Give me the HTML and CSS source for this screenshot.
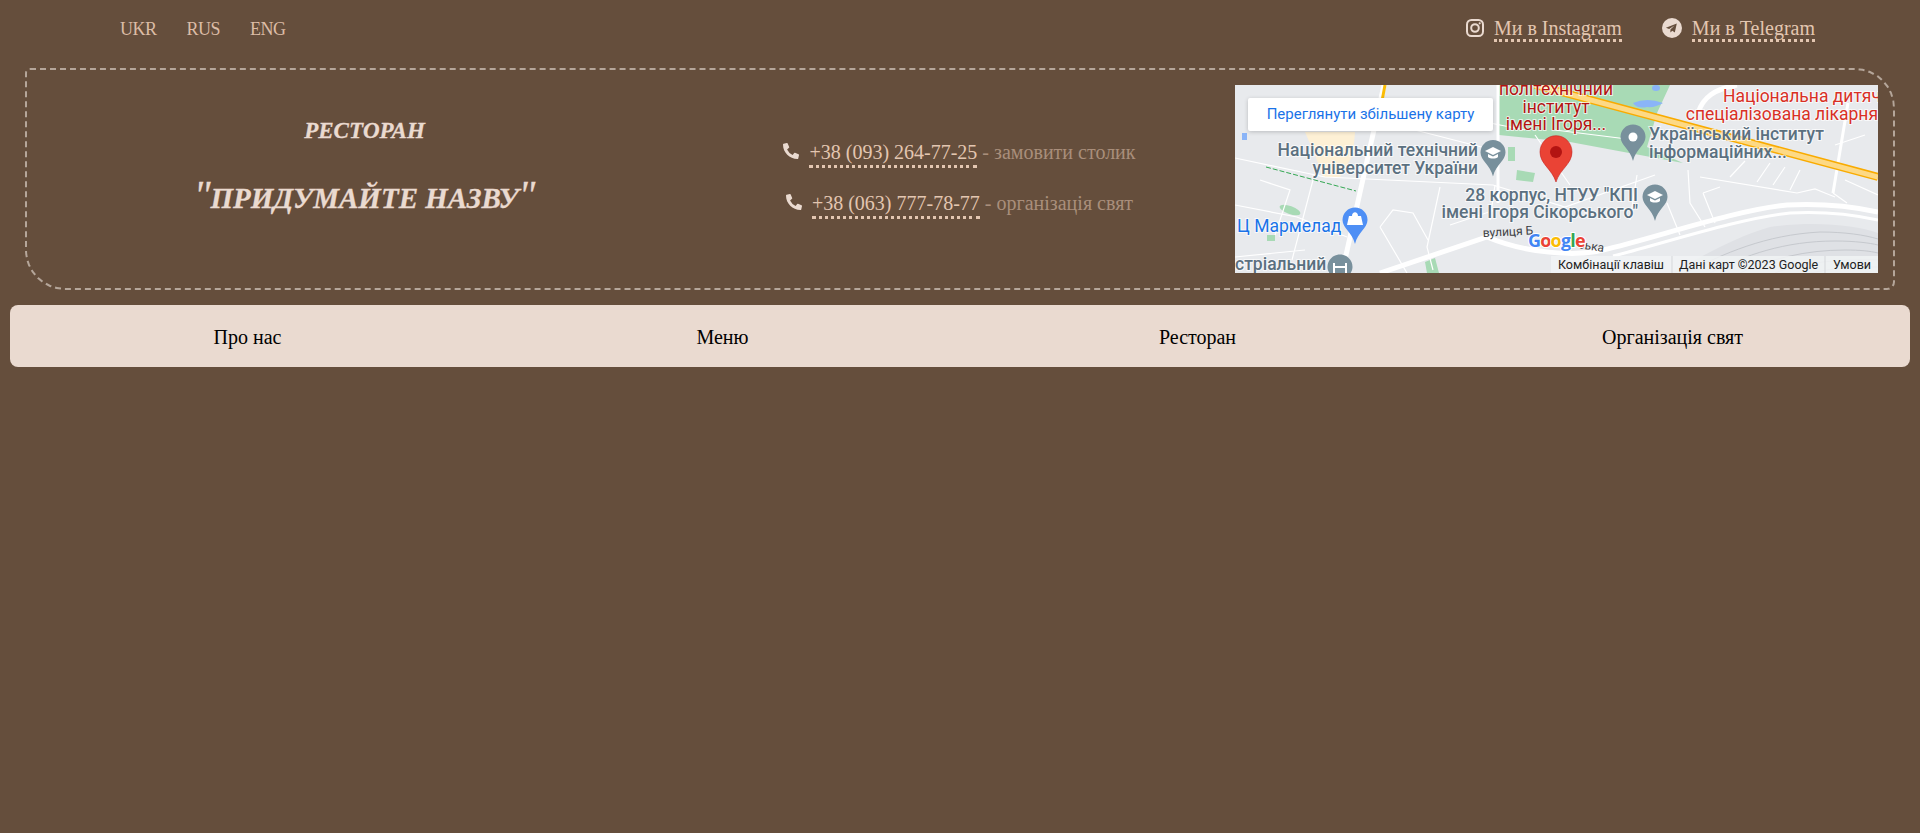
FILE: index.html
```html
<!DOCTYPE html>
<html lang="uk">

<head>
    <meta charset="UTF-8">
    <meta name="viewport" content="width=device-width, initial-scale=1.0">
    <title>Ресторан</title>
    <link rel="stylesheet" href="styles.css">
</head>

<body>
    <div class="top-bar">
        <div class="langs">
            <a href="#">UKR</a>
            <a href="#">RUS</a>
            <a href="#">ENG</a>
        </div>
        <div class="socials">
            <div class="social">
                <svg class="social-icon" viewBox="0 0 18 18">
                    <rect x="1" y="1" width="16" height="16" rx="4.5" class="ig-line" />
                    <circle cx="9" cy="9" r="3.8" class="ig-line" />
                    <circle cx="13.7" cy="4.3" r="1.1" class="icon-fill" />
                </svg>
                <a href="#" class="dotted">Ми в Instagram</a>
            </div>
            <div class="social">
                <svg class="social-icon tg" viewBox="0 0 20 20">
                    <circle cx="10" cy="10" r="10" class="icon-fill" />
                    <path d="M14.8 5.6 3.9 9.8l3.2 1.2 5.4-3.6-4.1 4.2 0 3 1.9-1.9 2.5 1.9z" class="tg-plane" />
                </svg>
                <a href="#" class="dotted">Ми в Telegram</a>
            </div>
        </div>
    </div>

    <div class="hero">
        <div class="brand">
            <h2>РЕСТОРАН</h2>
            <h1><span class="quote">"</span>ПРИДУМАЙТЕ НАЗВУ<span class="quote">"</span></h1>
        </div>

        <div class="phones">
            <p>
                <svg class="phone-icon" viewBox="0 0 512 512"><path d="M497.39 361.8l-112-48a24 24 0 0 0-28 6.9l-49.6 60.6A370.66 370.66 0 0 1 130.6 204.11l60.6-49.6a23.94 23.94 0 0 0 6.9-28l-48-112A24.16 24.16 0 0 0 122.6.61l-104 24A24 24 0 0 0 0 48c0 256.5 207.9 464 464 464a24 24 0 0 0 23.4-18.6l24-104a24.29 24.29 0 0 0-14.01-27.6z" /></svg>
                <a href="#" class="dotted">+38 (093) 264-77-25</a> - замовити столик
            </p>
            <p>
                <svg class="phone-icon" viewBox="0 0 512 512"><path d="M497.39 361.8l-112-48a24 24 0 0 0-28 6.9l-49.6 60.6A370.66 370.66 0 0 1 130.6 204.11l60.6-49.6a23.94 23.94 0 0 0 6.9-28l-48-112A24.16 24.16 0 0 0 122.6.61l-104 24A24 24 0 0 0 0 48c0 256.5 207.9 464 464 464a24 24 0 0 0 23.4-18.6l24-104a24.29 24.29 0 0 0-14.01-27.6z" /></svg>
                <a href="#" class="dotted">+38 (063) 777-78-77</a> - організація свят
            </p>
        </div>

        <div class="map">
            <svg class="map-svg" viewBox="0 0 643 188">
                <defs>
                    <path id="pin" d="M0-12.5C7-12.5 12.5-7 12.5 0 12.5 8 3 12 0 24-3 12-12.5 8-12.5 0-12.5-7-7-12.5 0-12.5Z" />
                    <g id="cap">
                        <path d="M0-6-8-2 0 2 8-2Z" class="cap-white" />
                        <path d="M-5 1V4C-3 6 3 6 5 4V1L0 3.5Z" class="cap-white" />
                    </g>
                </defs>
                <rect width="643" height="188" class="m-bg" />

                <!-- parks and patches -->
                <path d="M264 0H435L422 28 412 62 448 78 335 57 264 50Z" class="m-green" />
                <rect x="273" y="62" width="7" height="14" class="m-green" />
                <path d="M282 85 300 88 298 97 281 95Z" class="m-green" />
                <ellipse cx="55" cy="125" rx="11" ry="4" transform="rotate(20 55 125)" class="m-green" />
                <rect x="32" y="150" width="8" height="6" class="m-green" />
                <path d="M190 177 200 173 204 188H192Z" class="m-green" />
                <rect x="581" y="183" width="30" height="5" class="m-green" />
                <path d="M70 47H120L118 70 105 92H88L80 70Z" class="m-cream" />
                <rect x="7" y="48" width="5" height="7" class="m-water" />
                <path d="M398 18Q412 12 428 18 420 23 412 22 402 24 398 18Z" class="m-water" />
                <ellipse cx="421" cy="3" rx="4" ry="3" class="m-water" />
                <path d="M31 82 121 106" class="m-rail-green" />

                <!-- railway yard -->
                <path d="M435 188C470 170 500 152 535 142 580 136 620 140 643 148V188Z" class="m-yard" />
                <path d="M450 188C490 168 530 150 585 147 610 147 630 150 643 154M475 188C510 170 550 156 600 156 620 156 635 158 643 160M505 188C535 174 570 165 610 165 625 165 635 166 643 168M540 188C565 178 600 174 643 175M575 188C600 183 620 182 643 182" class="m-yard-line" />

                <!-- small roads -->
                <path d="M0 73 90 92 258 100 330 122 420 90M0 120 62 132 112 152M78 95 57 175M205 102 192 162 198 185M145 142 172 188M145 142 158 125 178 128 193 155M180 45 258 65M25 95 55 105 40 150M260 100 255 135M320 45 400 55M432 118 445 150M453 85 455 118 470 142M465 92 562 108M468 108 485 102M468 108 480 138M495 92 510 76M522 97 535 78M538 100 550 82M555 105 565 85M562 108 580 104 590 108 600 112M598 108 612 118M600 60 630 50M610 95 643 110M300 50 335 100M215 30 290 45M215 140 260 125M0 172 70 165M395 135 402 90" class="m-road-thin" />
                <path d="M263 0V118" class="m-road-mid" />
                <path d="M613 18 598 108" class="m-road-mid" />

                <!-- main roads -->
                <path d="M463 28C468 12 480 4 502 0" class="m-road-main" />
                <path d="M149 0 107 188" class="m-road-main" />
                <path d="M145 188 252 152C290 168 340 172 368 165 420 153 500 125 552 120 590 118 620 122 643 127" class="m-road-main" />
                <path d="M378 171C430 158 505 133 555 128 590 126 620 130 643 135" class="m-road-mid" />
                <path d="M150 0 147 16" class="m-road-yellow" />

                <!-- highway -->
                <path d="M300 0 643 92" class="m-hw-edge" />
                <path d="M300 0 643 92" class="m-hw-fill" />

                <!-- pins -->
                <use href="#pin" x="258" y="67.5" class="m-pin-gray" />
                <use href="#cap" x="258" y="68" />
                <use href="#pin" x="398" y="52" class="m-pin-gray" />
                <circle cx="398" cy="52" r="4.5" class="cap-white" />
                <use href="#pin" x="420" y="112" class="m-pin-gray" />
                <use href="#cap" x="420" y="112" />
                <use href="#pin" x="120" y="135" class="m-pin-blue" />
                <path d="M114 131H126L128 140H112ZM117 131C117 126 123 126 123 131" class="cap-white" />
                <use href="#pin" x="105" y="182" class="m-pin-gray" />
                <path d="M99 178V188M111 178V188M99 182H111" class="m-pin-line" />

                <!-- labels -->
                <text x="321" y="10" class="m-label m-dark-red">політехнічний</text>
                <text x="321" y="28" class="m-label m-dark-red">інститут</text>
                <text x="321" y="45" class="m-label m-dark-red">імені Ігоря...</text>
                <text x="243" y="71" class="m-label m-gray m-end">Національний технічний</text>
                <text x="243" y="89" class="m-label m-gray m-end">університет України</text>
                <text x="403" y="116" class="m-label m-gray m-end">28 корпус, НТУУ "КПІ</text>
                <text x="403" y="133" class="m-label m-gray m-end">імені Ігоря Сікорського"</text>
                <text x="414" y="55" class="m-label m-gray m-start">Український інститут</text>
                <text x="414" y="73" class="m-label m-gray m-start">інформаційних...</text>
                <text x="488" y="17" class="m-label m-red m-start">Національна дитяча</text>
                <text x="643" y="35" class="m-label m-red m-end">спеціалізована лікарня</text>
                <text x="2" y="147" class="m-label m-blue m-start">Ц Мармелад</text>
                <text x="0" y="185" class="m-label m-gray m-start">стріальний</text>
                <text x="248" y="152" transform="rotate(-3 248 152)" class="m-street">вулиця Б</text>
                <text x="343" y="163" transform="rotate(9 343 163)" class="m-street">ська</text>
                <text x="293" y="162" class="m-google"><tspan class="g-blue">G</tspan><tspan class="g-red">o</tspan><tspan class="g-yellow">o</tspan><tspan class="g-blue">g</tspan><tspan class="g-green">l</tspan><tspan class="g-red">e</tspan></text>

                <!-- marker -->
                <path d="M321 50.700C312 50.700 305 58 305 67 305 79 317 84 321 97 325 84 337 79 337 67 337 58 330 50.700 321 50.700Z" class="m-marker" />
                <circle cx="321" cy="67" r="6" class="m-marker-dot" />

                <!-- attribution -->
                <rect x="316" y="171" width="327" height="17" class="m-attr-bg" />
                <path d="M437 171V188M590 171V188" class="m-attr-sep" />
                <text x="323" y="184" class="m-attr">Комбінації клавіш</text>
                <text x="444" y="184" class="m-attr">Дані карт ©2023 Google</text>
                <text x="598" y="184" class="m-attr">Умови</text>
            </svg>
            <a href="#" class="map-link">Переглянути збільшену карту</a>
        </div>
    </div>

    <nav class="menu">
        <a href="#">Про нас</a>
        <a href="#">Меню</a>
        <a href="#">Ресторан</a>
        <a href="#">Організація свят</a>
    </nav>
</body>

</html>
```

FILE: styles.css
```css
body {
    font-family: "Liberation Serif", "Times New Roman", serif;
    background-color: #654e3c;
    margin: 0;
    padding: 0 10px;
    color: #eadad0;
}

a {
    color: inherit;
    text-decoration: none;
}

.top-bar {
    display: flex;
    justify-content: space-between;
    height: 58px;
    padding: 0 95px 0 110px;
    align-items: center;
}

.langs {
    display: flex;
    gap: 30px;
    font-size: 18px;
    letter-spacing: -0.5px;
    color: #dcbca6;
}

.socials {
    display: flex;
    gap: 40px;
    margin-top: 2px;
    font-size: 20px;
    color: #e3c6b1;
}

.social {
    display: flex;
    align-items: center;
    gap: 10px;
}

.social a {
    line-height: 21px;
}

.social-icon {
    width: 18px;
    height: 18px;
    margin-bottom: 4px;
}

.social-icon.tg {
    width: 20px;
    height: 20px;
}

.ig-line {
    fill: none;
    stroke: #eadad0;
    stroke-width: 2;
}

.icon-fill {
    fill: #eadad0;
}

.tg-plane {
    fill: #654e3c;
}

.dotted {
    border-bottom: 3px dotted #e3c6b1;
}

.hero {
    display: grid;
    grid-template-columns: 675px 515px 1fr;
    align-items: center;
    height: 222px;
    box-sizing: border-box;
    margin: 10px 15px 0 15px;
    border: 2px dashed #b5a69a;
    border-radius: 5px 40px 8px 40px;
}

.brand {
    padding-bottom: 26px;
    text-align: center;
    font-style: italic;
    font-weight: bold;
}

.brand h2 {
    margin: 0 0 35px;
    font-size: 23px;
    line-height: 26px;
    -webkit-text-stroke: 0.3px #eadad0;
}

.brand h1 {
    margin: 0;
    font-size: 29px;
    line-height: 32px;
    -webkit-text-stroke: 0.3px #eadad0;
}

.quote {
    font-size: 40px;
    font-weight: normal;
}

.phones {
    padding-bottom: 2px;
    text-align: center;
    font-size: 20px;
    color: #a98e7b;
}

.phones p {
    margin: 0 0 28px;
}

.phones p:last-child {
    margin-bottom: 0;
}

.phones a {
    padding-bottom: 2px;
    color: #e3c6b1;
}

.phone-icon {
    width: 16px;
    height: 16px;
    margin-right: 5px;
    fill: #eadad0;
}

.map {
    position: relative;
    justify-self: end;
    width: 643px;
    height: 188px;
    margin-right: 15px;
    overflow: hidden;
}

.map-svg {
    display: block;
    width: 643px;
    height: 188px;
}

.map-link {
    position: absolute;
    left: 13px;
    top: 13px;
    width: 245px;
    height: 33px;
    line-height: 33px;
    text-align: center;
    background-color: #fff;
    border-radius: 2px;
    box-shadow: 0 1px 4px rgba(0, 0, 0, 0.2);
    font-family: Roboto, sans-serif;
    font-size: 15px;
    color: #1a73e8;
}

.m-bg { fill: #e8eaed; }
.m-green { fill: #a8dab5; }
.m-cream { fill: #fdf0d5; }
.m-water { fill: #8ab4f8; }
.m-rail-green { fill: none; stroke: #34a853; stroke-width: 1; stroke-dasharray: 5 2; }
.m-yard { fill: #dfe1e5; }
.m-yard-line { fill: none; stroke: #c6c9ce; stroke-width: 1; }
.m-road-thin { fill: none; stroke: #fff; stroke-width: 1.2; }
.m-road-mid { fill: none; stroke: #fff; stroke-width: 3; }
.m-road-main { fill: none; stroke: #fff; stroke-width: 5; }
.m-road-yellow { fill: none; stroke: #fbbc04; stroke-width: 3; }
.m-hw-edge { fill: none; stroke: #f9ab00; stroke-width: 8; }
.m-hw-fill { fill: none; stroke: #fdd985; stroke-width: 5; }
.m-pin-gray { fill: #78909c; }
.m-pin-blue { fill: #4e8ff5; }
.m-pin-line { fill: none; stroke: #fff; stroke-width: 2; }
.cap-white { fill: #fff; }
.m-marker { fill: #ea4335; stroke: #c5221f; stroke-width: 0.6; }
.m-marker-dot { fill: #b31412; }

.m-label {
    font-family: Roboto, sans-serif;
    font-size: 17.5px;
    font-weight: 500;
    text-anchor: middle;
    paint-order: stroke;
    stroke: #fff;
    stroke-width: 2px;
    stroke-opacity: 0.7;
}

.m-end { text-anchor: end; }
.m-start { text-anchor: start; }
.m-dark-red { fill: #b31412; font-weight: 400; }
.m-red { fill: #d93025; font-weight: 400; }
.m-gray { fill: #5b7080; }
.m-blue { fill: #1a73e8; font-weight: 400; }

.m-street {
    font-family: Roboto, sans-serif;
    font-size: 12px;
    fill: #3c4043;
}

.m-google {
    font-family: "Open Sans", sans-serif;
    font-size: 18px;
    font-weight: 700;
    letter-spacing: -0.8px;
    paint-order: stroke;
    stroke: #fff;
    stroke-width: 2px;
}

.g-blue { fill: #4285f4; }
.g-red { fill: #ea4335; }
.g-yellow { fill: #fbbc04; }
.g-green { fill: #34a853; }

.m-attr-bg { fill: #f1f3f4; opacity: 0.85; }
.m-attr-sep { stroke: #d5d7da; stroke-width: 1; }

.m-attr {
    font-family: Roboto, sans-serif;
    font-size: 12.5px;
    fill: #222;
}

.menu {
    display: grid;
    grid-template-columns: repeat(4, 1fr);
    align-items: center;
    box-sizing: border-box;
    height: 62px;
    margin-top: 15px;
    padding-top: 2px;
    background-color: #eadad0;
    border-radius: 8px;
    text-align: center;
    font-size: 20px;
    color: #000;
}
```
